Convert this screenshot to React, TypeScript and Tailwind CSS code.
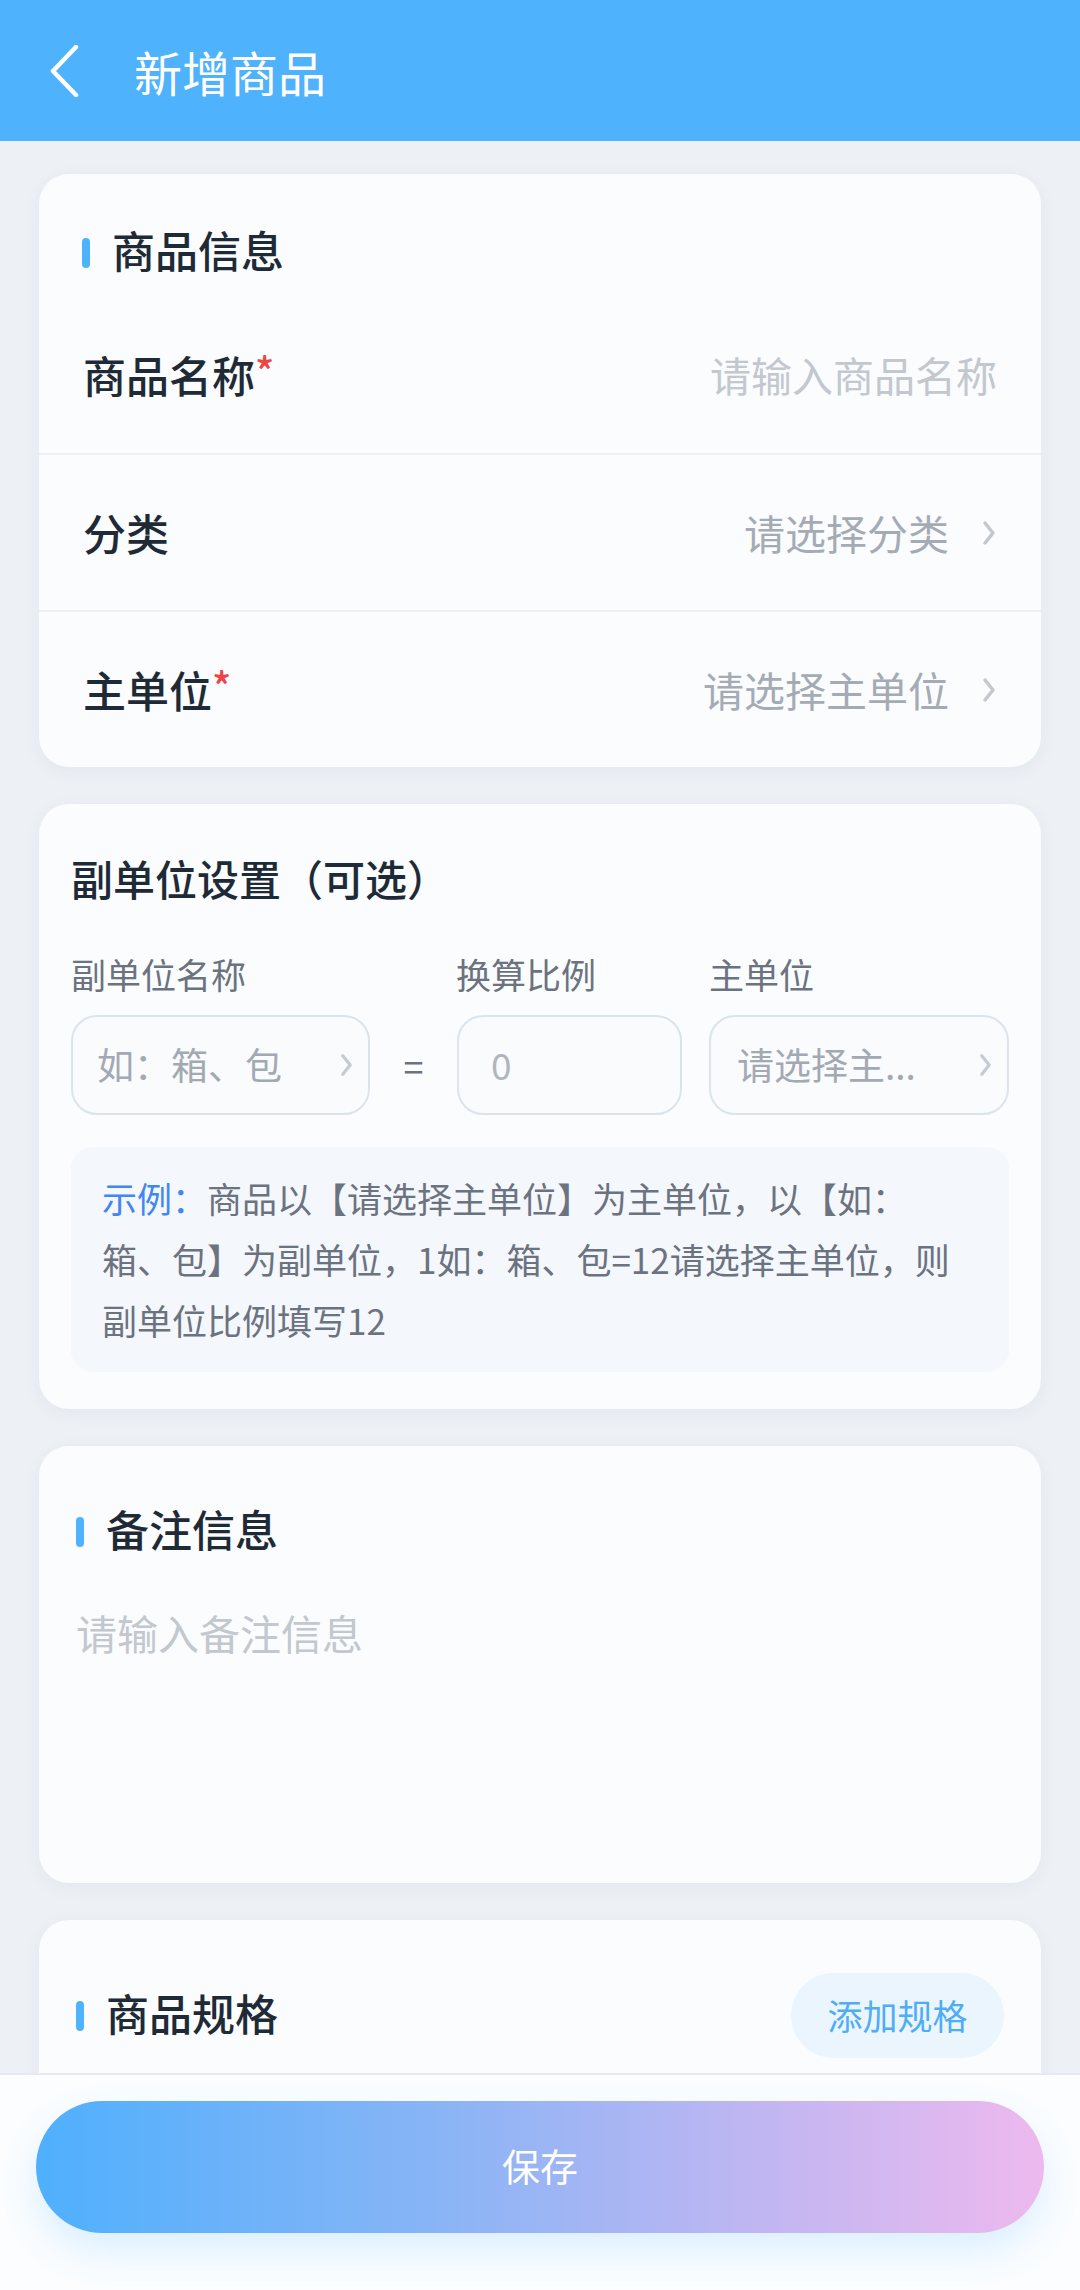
import React from "react";

function Chevron({ className = "" }: { className?: string }) {
  return (
    <svg viewBox="0 0 16 28" className={className} fill="none">
      <polyline points="4,4 12,14 4,24" stroke="currentColor" strokeWidth="3.5" strokeLinecap="round" strokeLinejoin="round" />
    </svg>
  );
}

function SectionTitle({ text }: { text: string }) {
  return (
    <div className="flex items-center">
      <div className="h-[30px] w-[8px] rounded-full bg-[#4fb2fc]" />
      <div className="relative top-[-4px] ml-[22px] text-[43px] font-medium leading-[60px] text-[#1f2a37]">{text}</div>
    </div>
  );
}

function FormRow({ label, required, placeholder, select, border }: { label: string; required?: boolean; placeholder: string; select?: boolean; border?: boolean }) {
  return (
    <div className={`flex h-[157px] items-center justify-between px-[44px] ${border ? "border-t-2 border-[#edf1f5]" : ""}`}>
      <div className="text-[43px] font-medium text-[#1f2a37]">
        {label}
        {required && <span className="relative top-[-6px] text-[40px] text-[#ef4444]">*</span>}
      </div>
      <div className="flex items-center">
        <span className={`text-[41px] ${select ? "text-[#a5abb5]" : "text-[#c3c7ce]"}`}>{placeholder}</span>
        {select && <Chevron className="ml-[32px] h-[28px] w-[16px] text-[#c3c8cf]" />}
      </div>
    </div>
  );
}

export default function App() {
  return (
    <div className="flex h-[2290px] w-[1080px] flex-col overflow-hidden bg-[#edf1f6] font-['Noto_Sans_CJK_SC','Noto_Sans',sans-serif]">
      <header className="flex h-[141px] shrink-0 items-center bg-[#4fb2fc]">
        <svg viewBox="0 0 30 52" className="ml-[50px] h-[52px] w-[30px]" fill="none">
          <polyline points="26,2 3,26 26,50" stroke="white" strokeWidth="4.5" strokeLinecap="round" strokeLinejoin="round" />
        </svg>
        <h1 className="ml-[54px] text-[48px] font-normal text-white">新增商品</h1>
      </header>

      <main className="flex-1 overflow-hidden px-[39px]">
        <section className="mt-[33px] rounded-[30px] bg-[#fafcfe] pt-[49px] shadow-[0_4px_18px_rgba(30,60,100,0.05)]">
          <div className="px-[43px]">
            <SectionTitle text="商品信息" />
          </div>
          <div className="mt-[13px]">
            <FormRow label="商品名称" required placeholder="请输入商品名称" />
            <FormRow label="分类" placeholder="请选择分类" select border />
            <FormRow label="主单位" required placeholder="请选择主单位" select border />
          </div>
        </section>

        <section className="mt-[37px] rounded-[30px] bg-[#fafcfe] px-[32px] pb-[37px] pt-[49px] shadow-[0_4px_18px_rgba(30,60,100,0.05)]">
          <div className="text-[42px] font-medium leading-[50px] text-[#1f2a37]">副单位设置（可选）</div>
          <div className="mt-[51px] flex text-[35px] leading-[40px] text-[#6b7280]">
            <div className="w-[385px]">副单位名称</div>
            <div className="w-[253px]">换算比例</div>
            <div>主单位</div>
          </div>
          <div className="mt-[21px] flex items-center">
            <div className="flex h-[100px] w-[299px] items-center justify-between rounded-[26px] border-2 border-[#dbe4ed] bg-[#f9fbfd] pl-[24px] pr-[14px]">
              <span className="text-[37px] text-[#a3a9b3]">如：箱、包</span>
              <Chevron className="h-[26px] w-[15px] text-[#c5cbd3]" />
            </div>
            <div className="w-[87px] text-center text-[36px] text-[#6b7280]">=</div>
            <div className="flex h-[100px] w-[225px] items-center rounded-[26px] border-2 border-[#dbe4ed] bg-[#f9fbfd] pl-[32px]">
              <span className="text-[37px] text-[#b0b6bf]">0</span>
            </div>
            <div className="ml-[27px] flex h-[100px] w-[300px] items-center justify-between rounded-[26px] border-2 border-[#dbe4ed] bg-[#f9fbfd] pl-[26px] pr-[14px]">
              <span className="text-[37px] text-[#a3a9b3]">请选择主...</span>
              <Chevron className="h-[26px] w-[15px] text-[#c5cbd3]" />
            </div>
          </div>
          <div className="mt-[32px] rounded-[22px] bg-[#f4f7fb] px-[31px] pb-[22px] pt-[20px] text-[35px] leading-[61px] text-[#6b7280]">
            <div className="whitespace-nowrap">
              <span className="text-[#4285f4]">示例：</span>商品以【请选择主单位】为主单位，以【如：
            </div>
            <div className="whitespace-nowrap">箱、包】为副单位，1如：箱、包=12请选择主单位，则</div>
            <div className="whitespace-nowrap">副单位比例填写12</div>
          </div>
        </section>

        <section className="mt-[37px] h-[437px] rounded-[30px] bg-[#fafcfe] px-[37px] pt-[56px] shadow-[0_4px_18px_rgba(30,60,100,0.05)]">
          <SectionTitle text="备注信息" />
          <div className="mt-[45px] text-[41px] leading-[50px] text-[#c3c7ce]">请输入备注信息</div>
        </section>

        <section className="mt-[37px] h-[300px] rounded-[30px] bg-[#fafcfe] px-[37px] pt-[53px] shadow-[0_4px_18px_rgba(30,60,100,0.05)]">
          <div className="flex h-[85px] items-center justify-between">
            <SectionTitle text="商品规格" />
            <div className="flex h-[85px] w-[213px] items-center justify-center rounded-full bg-[#eaf5fe] text-[35px] text-[#4fadf5]">
              添加规格
            </div>
          </div>
        </section>
      </main>

      <footer className="h-[217px] shrink-0 border-t-2 border-[#e6eaf0] bg-[#fbfdff] px-[36px] pt-[26px]">
        <button className="flex h-[132px] w-full items-center justify-center rounded-full bg-[linear-gradient(90deg,#4fb0fd_0%,#86b4f6_38%,#bdb6f2_70%,#edb9ee_100%)] pb-[6px] text-[38px] text-white shadow-[0_18px_36px_rgba(79,176,253,0.18)]">
          保存
        </button>
      </footer>
    </div>
  );
}
